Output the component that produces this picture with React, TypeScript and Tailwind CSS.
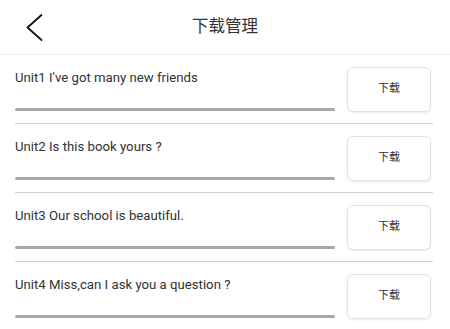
const units = [
  "Unit1 I've got many new friends",
  "Unit2 Is this book yours ?",
  "Unit3 Our school is beautiful.",
  "Unit4 Miss,can I ask you a question ?",
]

const font = { fontFamily: '"Roboto", "Noto Sans CJK SC", sans-serif' }

export default function App() {
  return (
    <div className="w-[450px] h-[329px] overflow-hidden bg-white text-[#333]" style={font}>
      <div className="grid grid-cols-[1fr_auto_1fr] items-center h-[55px] border-b border-[#ececec]">
        <div className="pl-[26px] flex items-center">
          <svg width="17" height="27" viewBox="0 0 17 27" fill="none">
            <polyline
              points="15.5,1 1.5,13.5 15.5,26"
              stroke="#111"
              strokeWidth="1.8"
              strokeLinecap="round"
              strokeLinejoin="round"
            />
          </svg>
        </div>
        <h1 className="text-[16.5px] leading-[20px] text-[#333]">下载管理</h1>
        <div />
      </div>

      {units.map((title) => (
        <div key={title} className="mx-[15px] w-[418px] pt-[12px] pb-[11px] border-b border-[#cfcfcf] flex">
          <div className="w-[320px]">
            <p className="text-[13.2px] leading-[22px] text-[#333]">{title}</p>
            <div className="mt-[19px] h-[3px] rounded-full bg-[#a8a8a8]" />
          </div>
          <button className="ml-auto mr-[2px] w-[84px] h-[45px] rounded-[6px] border border-[#e2e2e2] bg-white shadow-[0_1px_2px_rgba(0,0,0,0.08)] text-[11px] text-[#333] flex items-center justify-center">
            下载
          </button>
        </div>
      ))}
    </div>
  )
}
